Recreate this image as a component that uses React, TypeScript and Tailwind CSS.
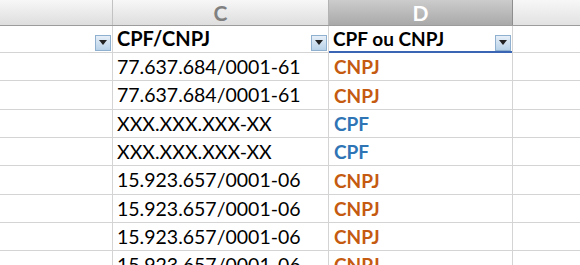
import React from "react";

const rows = [
  { doc: "77.637.684/0001-61", kind: "CNPJ", h: "h-[28px]" },
  { doc: "77.637.684/0001-61", kind: "CNPJ", h: "h-[29px]" },
  { doc: "XXX.XXX.XXX-XX", kind: "CPF", h: "h-[28px]" },
  { doc: "XXX.XXX.XXX-XX", kind: "CPF", h: "h-[28px]" },
  { doc: "15.923.657/0001-06", kind: "CNPJ", h: "h-[29px]" },
  { doc: "15.923.657/0001-06", kind: "CNPJ", h: "h-[28px]" },
  { doc: "15.923.657/0001-06", kind: "CNPJ", h: "h-[28px]" },
  { doc: "15.923.657/0001-06", kind: "CNPJ", h: "h-[28px]" },
];

const FilterButton = () => (
  <div className="mb-[1px] mr-[1px] flex h-4 w-4 items-center justify-center border border-[#8fb0cf] bg-gradient-to-b from-[#e6eff8] to-[#b9d2e8]">
    <svg width="8" height="5" viewBox="0 0 8 5" className="-mt-[2px]">
      <path d="M0 0 H8 L4 5 Z" fill="#222" />
    </svg>
  </div>
);

export default function App() {
  return (
    <div
      className="h-[265px] w-[580px] overflow-hidden bg-white"
      style={{ fontFamily: "Lato, 'Open Sans', sans-serif" }}
    >
      {/* column letters */}
      <div className="grid h-[26px] grid-cols-[113px_216px_184px_1fr] border-b border-[#9c9c9c]">
        <div className="border-r border-[#c2c2c2] bg-gradient-to-b from-[#f7f7f7] to-[#dedede]" />
        <div className="flex items-center justify-center border-r border-[#b3b3b3] bg-gradient-to-b from-[#f7f7f7] to-[#dedede] text-[21px] font-bold leading-none text-[#808080]">
          C
        </div>
        <div className="flex items-center justify-center border-r border-[#8e8e8e] bg-gradient-to-b from-[#cccccc] to-[#a9a9a9] text-[21px] font-bold leading-none text-white">
          D
        </div>
        <div className="bg-gradient-to-b from-[#f7f7f7] to-[#e2e2e2]" />
      </div>

      {/* header row with filters */}
      <div className="grid h-[27px] grid-cols-[113px_216px_184px_1fr] border-b border-[#d4d4d4]">
        <div className="flex items-end justify-end border-r border-[#d4d4d4]">
          <FilterButton />
        </div>
        <div className="flex items-center justify-between border-r border-[#d4d4d4] pl-[4px] text-[20px] font-bold leading-none text-black">
          <span className="-mt-[2px]">CPF/CNPJ</span>
          <div className="self-end">
            <FilterButton />
          </div>
        </div>
        <div className="relative flex items-center justify-between border-r border-[#d4d4d4] pl-[4px] text-[19px] font-bold leading-none text-black">
          <span className="-mt-[2px]">CPF ou CNPJ</span>
          <div className="self-end">
            <FilterButton />
          </div>
          <div className="absolute -bottom-[1px] left-0 right-0 h-[2px] bg-[#3a64b4]" />
        </div>
        <div />
      </div>

      {rows.map((r, i) => (
        <div
          key={i}
          className={`grid grid-cols-[113px_216px_184px_1fr] border-b border-[#d4d4d4] ${r.h}`}
        >
          <div className="border-r border-[#d4d4d4]" />
          <div className="flex items-center border-r border-[#d4d4d4] pl-[4px] text-[19.5px] leading-none text-black">
            {r.doc}
          </div>
          <div
            className={`flex items-center border-r border-[#d4d4d4] pl-[5px] text-[19px] font-bold leading-none ${
              r.kind === "CPF" ? "text-[#2f74b5]" : "text-[#c55a11]"
            }`}
          >
            {r.kind}
          </div>
          <div />
        </div>
      ))}
    </div>
  );
}
